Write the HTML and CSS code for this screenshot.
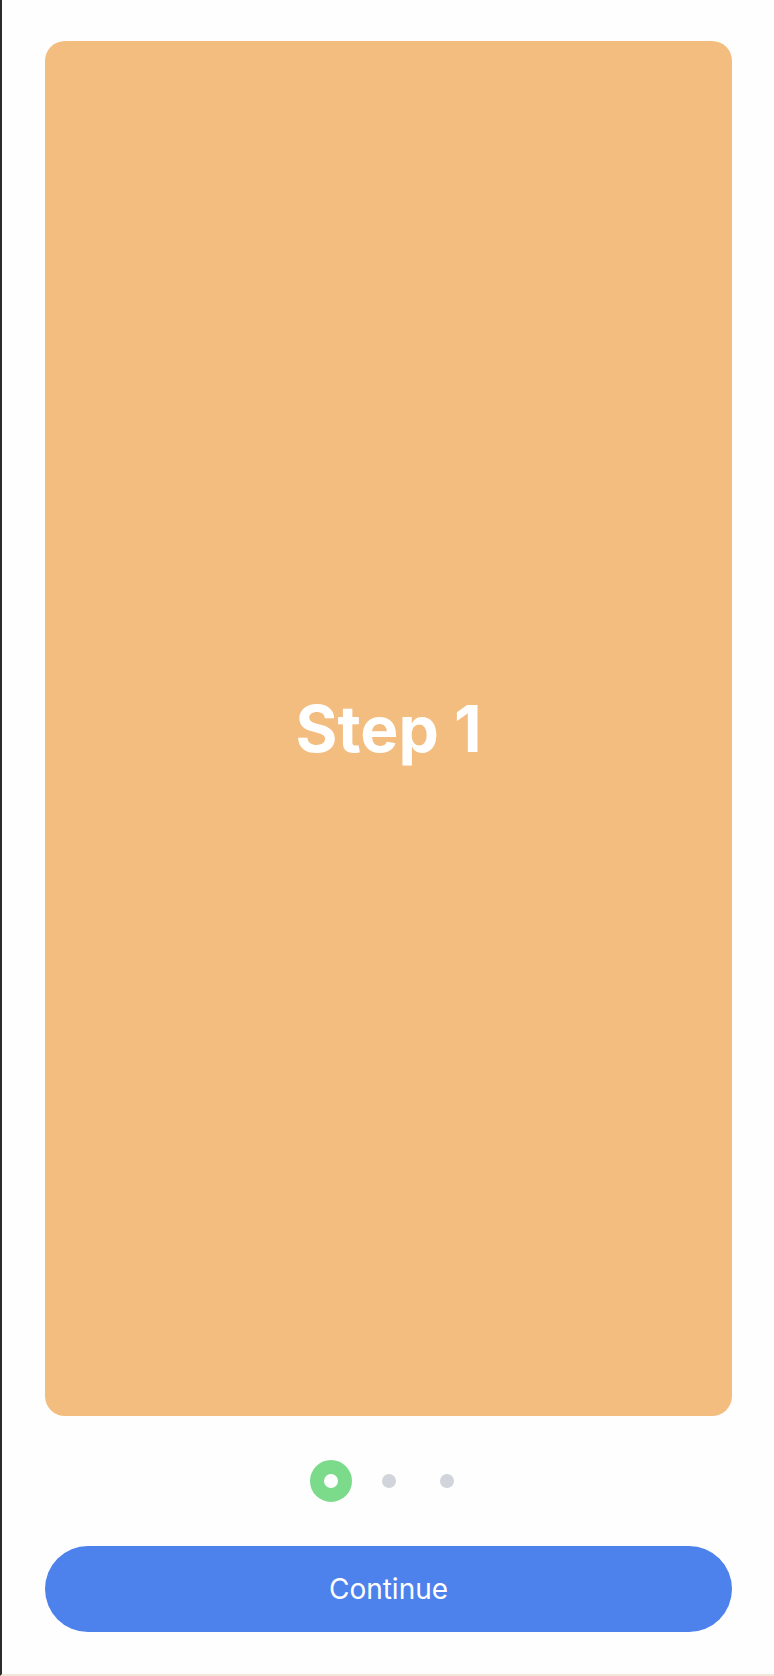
FILE: index.html
```html
<!DOCTYPE html>
<html lang="en">
<head>
<meta charset="utf-8">
<title>Onboarding</title>
<link rel="stylesheet" href="styles.css">
</head>
<body>
<div class="screen">
  <main class="content">
    <section class="card">
      <h1 class="card-title">Step 1</h1>
    </section>
    <div class="dots">
      <span class="dot dot-active"></span>
      <span class="dot"></span>
      <span class="dot"></span>
    </div>
    <button class="continue">Continue</button>
  </main>
</div>
</body>
</html>
```
FILE: styles.css
```css
html, body {
  margin: 0;
  padding: 0;
  background: #ffffff;
}
body {
  font-family: Inter, "Noto Sans", "Liberation Sans", sans-serif;
}
.screen {
  width: 774px;
  height: 1676px;
  box-sizing: border-box;
  border-left: 2px solid #2c2c2c;
  border-bottom: 2px solid #f2e6d8;
  background: #fefefe;
  display: flex;
  flex-direction: column;
}
.content {
  flex: 1;
  display: flex;
  flex-direction: column;
  align-items: stretch;
  padding: 41px 42px 0 43px;
}
.card {
  height: 1375px;
  flex: none;
  background: #f2bd7f;
  border-radius: 20px;
  display: flex;
  align-items: center;
  justify-content: center;
}
.card-title {
  margin: 0;
  color: #ffffff;
  font-size: 64px;
  font-weight: 700;
  letter-spacing: 0;
  line-height: 1;
}
.dots {
  margin-top: 58px;
  height: 14px;
  display: flex;
  justify-content: center;
  align-items: center;
  gap: 44px;
}
.dot {
  width: 14px;
  height: 14px;
  flex: none;
  border-radius: 50%;
  background: #d1d4db;
}
.dot-active {
  background: #ffffff;
  border: 14px solid #7bdb8b;
  margin: -14px;
}
.continue {
  margin-top: 58px;
  height: 86px;
  border: none;
  border-radius: 43px;
  background: #4d81ec;
  color: #ffffff;
  font-family: Inter, "Noto Sans", "Liberation Sans", sans-serif;
  font-size: 28px;
  font-weight: 400;
  padding: 0;
  cursor: pointer;
}
```
